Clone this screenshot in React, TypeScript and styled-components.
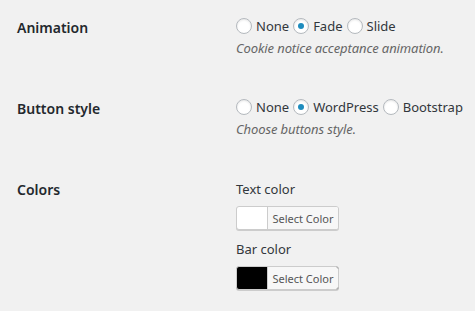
import styled, { createGlobalStyle } from "styled-components";

const GlobalStyle = createGlobalStyle`
    html, body {
        margin: 0;
        padding: 0;
        background: #f1f1f1;
    }
    body {
        font-family: "Noto Sans", "Open Sans", sans-serif;
        font-size: 13px;
        color: #23282d;
    }
`;

const Page = styled.div`
    padding: 0 0 0 17px;
`;

// one settings row: label column on the left, field column on the right
const Row = styled.div`
    display: grid;
    grid-template-columns: 219px 1fr;
    padding: 17px 0 24px;
`;

const Label = styled.div`
    font-size: 14px;
    font-weight: 600;
    line-height: 20px;
    margin-top: 1px;
    color: #23282d;
`;

const Field = styled.div`
    display: flex;
    flex-direction: column;
    color: #32373c;
`;

const RadioGroup = styled.div`
    display: flex;
    align-items: center;
    height: 16px;
    margin-top: 1px;
`;

const RadioLabel = styled.label`
    display: flex;
    align-items: center;
    margin-right: 4px;
    line-height: 16px;
    cursor: pointer;
`;

const Radio = styled.span<{ $checked?: boolean }>`
    box-sizing: border-box;
    width: 16px;
    height: 16px;
    margin: 0 4px 0 0;
    border: 1px solid #b4b9be;
    border-radius: 50%;
    background: #fff;
    box-shadow: inset 0 1px 2px rgba(0, 0, 0, 0.1);
    display: flex;
    align-items: center;
    justify-content: center;

    &::after {
        content: "";
        display: ${({ $checked }) => ($checked ? "block" : "none")};
        width: 6px;
        height: 6px;
        border-radius: 50%;
        background: #1e8cbe;
    }
`;

const Description = styled.p`
    margin: 5px 0 0;
    font-style: italic;
    font-size: 13px;
    letter-spacing: -0.1px;
    color: #666;
    line-height: 18px;
`;

const ColorLabel = styled.div`
    line-height: 18px;
    margin: 1px 0 8px;
`;

const ColorButton = styled.button<{ $swatch: string }>`
    display: flex;
    align-items: stretch;
    box-sizing: border-box;
    width: 103px;
    height: 24px;
    padding: 0;
    margin: 0 0 9px;
    border: 1px solid #ccc;
    border-radius: 3px;
    background: ${({ $swatch }) => $swatch};
    box-shadow: 0 1px 0 #ccc;
    overflow: hidden;
    cursor: pointer;
`;

const Swatch = styled.span`
    width: 30px;
    flex: none;
`;

const ButtonText = styled.span`
    flex: 1;
    display: flex;
    align-items: center;
    justify-content: center;
    border-left: 1px solid #ccc;
    background: #f7f7f7;
    color: #555;
    font-family: "Noto Sans", "Open Sans", sans-serif;
    font-size: 11px;
`;

type Option = { label: string; checked?: boolean };

function RadioRow({ options }: { options: Option[] }) {
    return (
        <RadioGroup>
            {options.map((o) => (
                <RadioLabel key={o.label}>
                    <Radio $checked={o.checked} />
                    {o.label}
                </RadioLabel>
            ))}
        </RadioGroup>
    );
}

export default function App() {
    return (
        <>
            <GlobalStyle />
            <Page>
                <Row>
                    <Label>Animation</Label>
                    <Field>
                        <RadioRow options={[{ label: "None" }, { label: "Fade", checked: true }, { label: "Slide" }]} />
                        <Description>Cookie notice acceptance animation.</Description>
                    </Field>
                </Row>
                <Row>
                    <Label>Button style</Label>
                    <Field>
                        <RadioRow options={[{ label: "None" }, { label: "WordPress", checked: true }, { label: "Bootstrap" }]} />
                        <Description>Choose buttons style.</Description>
                    </Field>
                </Row>
                <Row>
                    <Label>Colors</Label>
                    <Field>
                        <ColorLabel>Text color</ColorLabel>
                        <ColorButton $swatch="#fff">
                            <Swatch />
                            <ButtonText>Select Color</ButtonText>
                        </ColorButton>
                        <ColorLabel>Bar color</ColorLabel>
                        <ColorButton $swatch="#000">
                            <Swatch />
                            <ButtonText>Select Color</ButtonText>
                        </ColorButton>
                    </Field>
                </Row>
            </Page>
        </>
    );
}
